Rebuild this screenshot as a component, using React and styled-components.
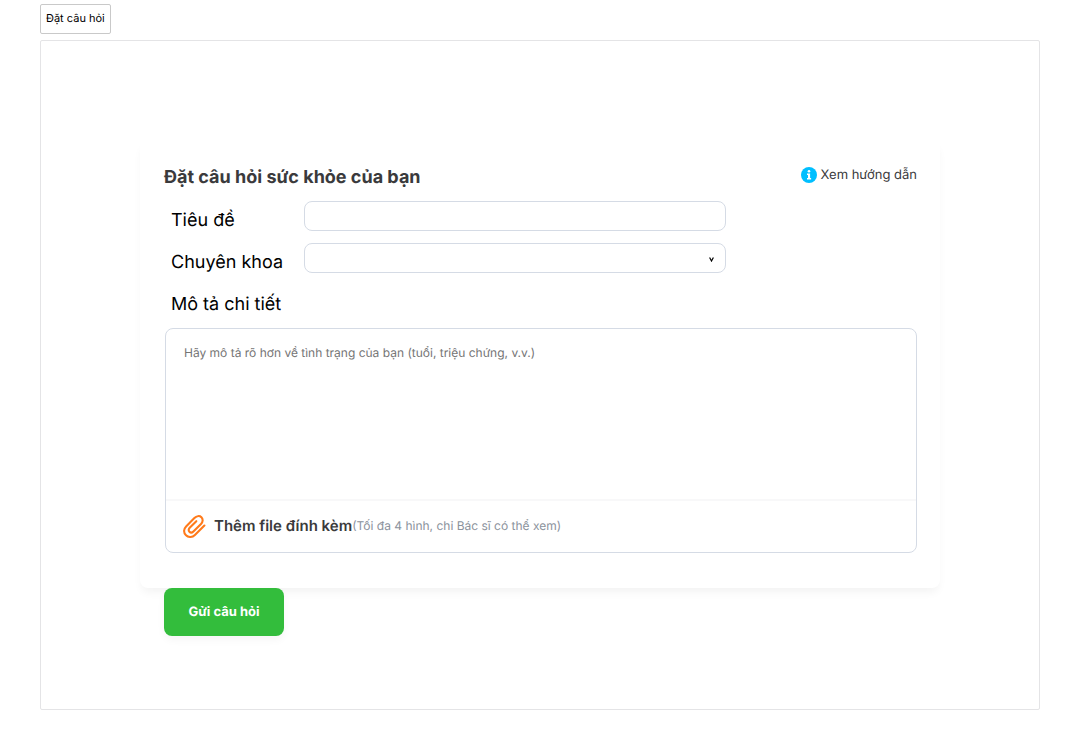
import React from "react";
import styled, { createGlobalStyle } from "styled-components";

const GlobalStyle = createGlobalStyle`
  *, *::before, *::after { box-sizing: border-box; }
  body {
    margin: 0;
    background: #fff;
    color: #000;
    font-family: Inter, "Noto Sans", sans-serif;
    text-rendering: geometricPrecision;
  }
  button, input, select, textarea { font: inherit; color: inherit; text-rendering: inherit; }
`;

const Page = styled.div`
  padding: 4px 40px 40px;
`;

const Tabs = styled.nav`
  display: flex;
  margin-bottom: 6px;
`;

const Tab = styled.button`
  height: 30px;
  padding: 0 5px 2px;
  border: 1px solid #c9c9c9;
  border-radius: 2px;
  background: #fff;
  font-size: 11px;
  line-height: 16px;
  white-space: nowrap;
`;

const Panel = styled.main`
  padding: 99px 99px 73px;
  border: 1px solid #e4e4e6;
  border-radius: 2px;
`;

const Card = styled.section`
  padding: 24px 23px 35px 24px;
  border-radius: 8px;
  background: #fff;
  box-shadow: 0 6px 10px -2px rgba(0, 0, 0, 0.05);
`;

const CardHeader = styled.header`
  display: flex;
  justify-content: space-between;
  align-items: flex-start;
  margin-bottom: 9px;
`;

const Title = styled.h1`
  margin: 0;
  color: #3a3a3c;
  font-size: 18px;
  font-weight: 700;
  line-height: 28px;
`;

const GuideLink = styled.a`
  display: flex;
  align-items: center;
  gap: 4px;
  color: #3a3a3c;
  font-size: 13px;
  line-height: 22px;
  text-decoration: none;
`;

const Fields = styled.div`
  display: grid;
  grid-template-columns: 133px minmax(0, 422px);
  row-gap: 12px;
  padding-left: 7px;
`;

const Label = styled.label`
  height: 30px;
  padding-top: 8px;
  font-size: 18px;
  line-height: 24px;
`;

const DetailLabel = styled(Label)`
  grid-column: 1 / -1;
`;

const Input = styled.input`
  width: 100%;
  height: 30px;
  padding: 0 12px;
  border: 1px solid #d5dbe5;
  border-radius: 8px;
  background: #fff;
  font-size: 12px;
`;

const SelectBox = styled.div`
  position: relative;
  height: 30px;
`;

const Select = styled(Input)`
  appearance: none;
`;

const Caret = styled.svg`
  position: absolute;
  right: 12px;
  top: 14px;
  pointer-events: none;
`;

const Editor = styled.div`
  margin: 13px 0 0 1px;
  border: 1px solid #d5dbe5;
  border-radius: 8px;
`;

const Detail = styled.textarea`
  display: block;
  width: 100%;
  height: 170px;
  padding: 14px 18px;
  border: 0;
  border-radius: 8px;
  background: transparent;
  font-size: 12px;
  line-height: 20px;
  resize: none;
  &::placeholder { color: #757575; opacity: 1; }
`;

const AttachBar = styled.div`
  display: flex;
  align-items: center;
  height: 53px;
  padding: 0 16px 2px;
  border-top: 2px solid #f8f8f9;
`;

const AttachButton = styled.button`
  display: flex;
  align-items: center;
  gap: 8px;
  padding: 0;
  border: 0;
  background: none;
  color: #3a3a3c;
  font-size: 15px;
  font-weight: 600;
  line-height: 24px;
`;

const Hint = styled.span`
  color: #8b929c;
  font-size: 12px;
  line-height: 24px;
`;

const Submit = styled.button`
  display: block;
  height: 48px;
  min-width: 120px;
  margin-left: 24px;
  padding: 0 24px;
  border: 0;
  border-radius: 8px;
  background: #33bd3c;
  box-shadow: 0 4px 8px rgba(0, 0, 0, 0.04);
  color: #fff;
  font-size: 13px;
  font-weight: 700;
  white-space: nowrap;
`;

function InfoIcon() {
  return (
    <svg width="16" height="16" viewBox="0 0 16 16" aria-hidden="true">
      <circle cx="8" cy="8" r="8" fill="#00bfff" />
      <circle cx="8" cy="4.3" r="1.3" fill="#fff" />
      <path d="M6 6.5h3.1v4.6h1v1.4H6v-1.4h1V7.9H6z" fill="#fff" />
    </svg>
  );
}

function ClipIcon() {
  return (
    <svg width="24" height="24" viewBox="0 0 24 24" fill="none" stroke="#ff7a1a" strokeWidth="2.1" strokeLinecap="round" strokeLinejoin="round" aria-hidden="true">
      <path d="M22.4 11.6L12.9 20.9C10.5 23.3 6.5 23.8 4 21.3C1.3 18.7 1.6 14.9 4.1 12.4L12.4 4.1C14.5 2 17.5 1.4 19.4 3.3C21.3 5.2 20.9 8 19 9.9L11.4 17.4C10.2 18.6 8.5 18.8 7.4 17.7C6.3 16.6 6.5 15 7.7 13.8L14.3 7.2" />
    </svg>
  );
}

export default function App() {
  return (
    <>
      <GlobalStyle />
      <Page>
        <Tabs>
          <Tab type="button">Đặt câu hỏi</Tab>
        </Tabs>
        <Panel>
          <form onSubmit={(event) => event.preventDefault()}>
            <Card>
              <CardHeader>
                <Title>Đặt câu hỏi sức khỏe của bạn</Title>
                <GuideLink href="#guide">
                  <InfoIcon />
                  <span>Xem hướng dẫn</span>
                </GuideLink>
              </CardHeader>
              <Fields>
                <Label htmlFor="title">Tiêu đề</Label>
                <Input id="title" type="text" />
                <Label htmlFor="specialty">Chuyên khoa</Label>
                <SelectBox>
                  <Select as="select" id="specialty" defaultValue="">
                    <option value="" />
                  </Select>
                  <Caret width="5" height="5" viewBox="0 0 5 5" fill="none" stroke="#000" strokeWidth="1.2" aria-hidden="true">
                    <path d="M0.6 0.5L2.5 4L4.4 0.5" />
                  </Caret>
                </SelectBox>
                <DetailLabel htmlFor="detail">Mô tả chi tiết</DetailLabel>
              </Fields>
              <Editor>
                <Detail id="detail" placeholder="Hãy mô tả rõ hơn về tình trạng của bạn (tuổi, triệu chứng, v.v.)" />
                <AttachBar>
                  <AttachButton type="button">
                    <ClipIcon />
                    <span>Thêm file đính kèm</span>
                  </AttachButton>
                  <Hint>(Tối đa 4 hình, chỉ Bác sĩ có thể xem)</Hint>
                </AttachBar>
              </Editor>
            </Card>
            <Submit type="submit">Gửi câu hỏi</Submit>
          </form>
        </Panel>
      </Page>
    </>
  );
}
